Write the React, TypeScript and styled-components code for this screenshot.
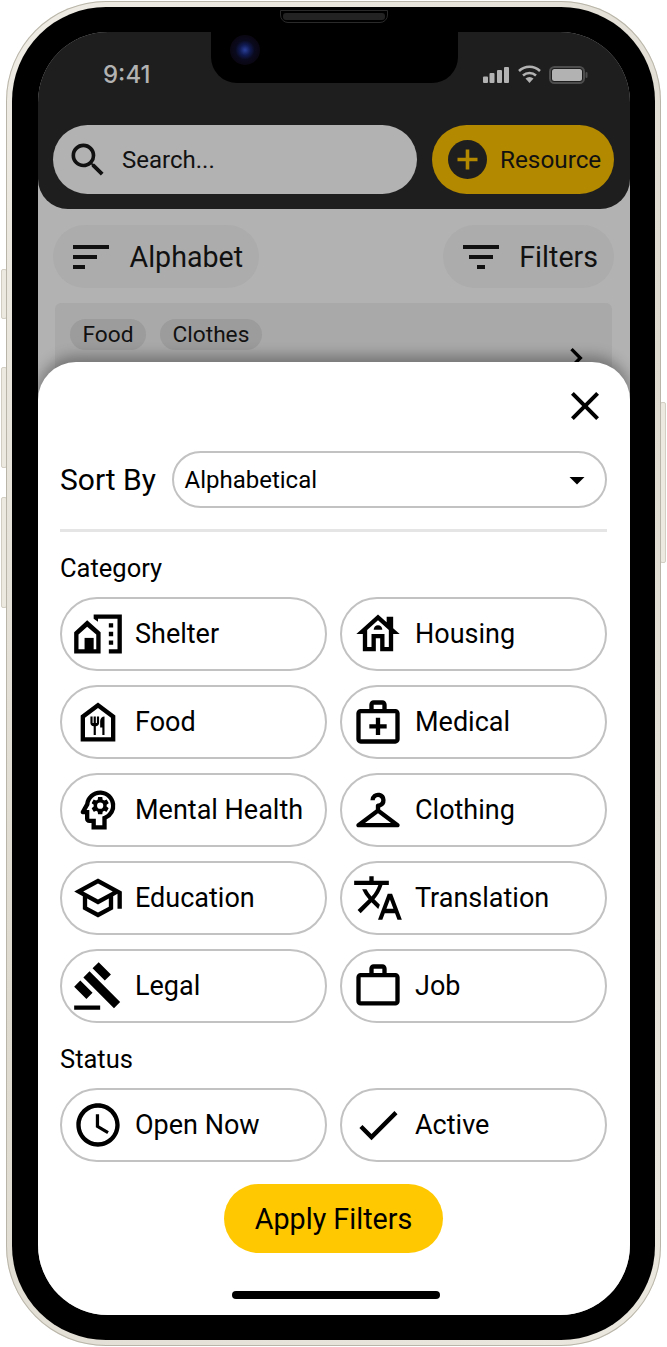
import styled, {createGlobalStyle} from "styled-components";
import type {ComponentType} from "react";
import {
    MdAccessTime,
    MdArrowDropDown,
    MdCheck,
    MdChevronRight,
    MdClose,
    MdFilterList,
    MdGavel,
    MdOutlineCheckroom,
    MdOutlineFoodBank,
    MdOutlineHouse,
    MdOutlineMedicalServices,
    MdOutlinePsychology,
    MdOutlineSchool,
    MdSearch,
    MdSort,
    MdTranslate,
    MdWorkOutline,
} from "react-icons/md";

const Global = createGlobalStyle`
  html, body {
    margin: 0;
    padding: 0;
    background: white;
  }

  body {
    font-family: Roboto, "Liberation Sans", sans-serif;
    color: black;
  }
`;

const Page = styled.div`
  position: relative;
  width: 667px;
  height: 1347px;
  padding: 1px 6px;
  box-sizing: border-box;
`;

const SideButton = styled.div<{ $side: "left" | "right"; $top: number; $height: number }>`
  position: absolute;
  top: ${p => p.$top}px;
  height: ${p => p.$height}px;
  width: 6px;
  box-sizing: border-box;
  ${p => p.$side}: 1px;
  background: #ece9e1;
  border: 1px solid #d2cec3;
  border-radius: 2px;
`;

const Frame = styled.div`
  position: relative;
  height: 100%;
  box-sizing: border-box;
  padding: 6px;
  border-radius: 100px;
  background: linear-gradient(135deg, #efece5, #dedad0 50%, #ebe8e0);
  box-shadow: inset 0 0 0 1px #b9b5a9;
`;

const Bezel = styled.div`
  position: relative;
  height: 100%;
  box-sizing: border-box;
  padding: 25px 25px 25px 26px;
  border-radius: 94px;
  background: black;
`;

const Speaker = styled.div`
  position: absolute;
  top: 3px;
  left: 50%;
  width: 108px;
  height: 13px;
  margin-left: -54px;
  box-sizing: border-box;
  padding: 2px;
  border-radius: 0 0 8px 8px;
  background: black;
  border: 1px solid #2a2a2a;

  &::after {
    content: "";
    display: block;
    height: 7px;
    border-radius: 3px;
    background: #232323;
  }
`;

const Screen = styled.div`
  position: relative;
  height: 100%;
  overflow: hidden;
  border-radius: 70px;
  background: #b2b2b2;
`;

const Notch = styled.div`
  position: absolute;
  top: 0;
  left: 173px;
  width: 247px;
  height: 51px;
  border-radius: 0 0 26px 26px;
  background: black;
`;

const Camera = styled.div`
  position: absolute;
  top: 3px;
  left: 19px;
  width: 30px;
  height: 30px;
  border-radius: 50%;
  background: radial-gradient(circle, #2a3f9a 0, #101a50 25%, #0a0a1e 45%, #0a0612 70%, black 100%);
`;

const Header = styled.header`
  height: 177px;
  box-sizing: border-box;
  padding: 0 16px 0 15px;
  border-radius: 0 0 30px 30px;
  background: #1e1e1e;
`;

const StatusBar = styled.div`
  display: flex;
  align-items: center;
  justify-content: space-between;
  height: 93px;
  box-sizing: border-box;
  padding: 0 26px 8px 50px;
  color: #b2b2b2;
`;

const Time = styled.span`
  font-family: Inter, sans-serif;
  font-size: 24px;
  font-weight: 500;
`;

const StatusIcons = styled.svg`
  display: block;
`;

const SearchRow = styled.div`
  display: flex;
  gap: 15px;
`;

const SearchBox = styled.div`
  flex: 1;
  display: flex;
  align-items: center;
  gap: 12px;
  height: 69px;
  padding-left: 13px;
  border-radius: 35px;
  background: #b2b2b2;
  color: #111;
  font-size: 24px;
`;

const AddButton = styled.div`
  display: flex;
  align-items: center;
  gap: 13px;
  width: 182px;
  height: 69px;
  box-sizing: border-box;
  padding-left: 16px;
  border-radius: 35px;
  background: #b38900;
  font-size: 24.3px;
  color: #111;
`;

const AddCircle = styled.svg`
  display: block;
  flex: none;
`;

const ToolRow = styled.div`
  display: flex;
  justify-content: space-between;
  padding: 16px 16px 0 15px;
`;

const ToolButton = styled.div`
  display: flex;
  align-items: center;
  gap: 14.5px;
  height: 63px;
  padding: 0 16px 0 14px;
  border-radius: 32px;
  background: #acacac;
  font-size: 28.6px;
  color: #111;
`;

const Card = styled.div`
  position: relative;
  height: 120px;
  margin: 15px 18px 0 17px;
  padding: 16px 15px;
  box-sizing: border-box;
  border-radius: 6px;
  background: #a9a9a9;
`;

const ChipRow = styled.div`
  display: flex;
  gap: 14px;
`;

const Chip = styled.span`
  height: 31px;
  line-height: 31px;
  padding: 0 12.5px;
  border-radius: 16px;
  background: #9c9c9c;
  font-size: 22.7px;
  color: #111;
`;

const CardChevron = styled.span`
  position: absolute;
  top: 35px;
  right: 16px;
  display: flex;
`;

const Sheet = styled.section`
  position: absolute;
  left: 0;
  right: 0;
  top: 330px;
  bottom: 0;
  padding: 0 23px 0 22px;
  border-radius: 38px 38px 0 0;
  background: white;
  box-shadow: 0 -6px 14px rgba(0, 0, 0, 0.32);
`;

const CloseRow = styled.div`
  display: flex;
  justify-content: flex-end;
  height: 89px;
  padding-top: 20px;
  box-sizing: border-box;
  margin-right: -2px;
`;

const SortRow = styled.div`
  display: flex;
  align-items: center;
  gap: 16px;
`;

const SortLabel = styled.span`
  font-size: 30px;
`;

const Select = styled.div`
  flex: 1;
  display: flex;
  align-items: center;
  justify-content: space-between;
  height: 57px;
  box-sizing: border-box;
  padding: 0 10px 0 10.5px;
  border: 2px solid #c2c2c2;
  border-radius: 29px;
  font-size: 24px;
`;

const Divider = styled.hr`
  height: 3px;
  margin: 21px 0 0;
  border: 0;
  background: #e5e5e5;
`;

const SectionLabel = styled.div<{ $top: number }>`
  margin-top: ${p => p.$top}px;
  height: 29px;
  line-height: 29px;
  font-size: 25.5px;
`;

const OptionGrid = styled.div`
  display: grid;
  grid-template-columns: 1fr 1fr;
  gap: 14px 13px;
  margin-top: 14px;
`;

const Option = styled.div`
  display: flex;
  align-items: center;
  gap: 11px;
  height: 74px;
  box-sizing: border-box;
  padding-left: 10px;
  border: 2px solid #c2c2c2;
  border-radius: 37px;
  font-size: 27px;

  > svg {
    flex: none;
  }
`;

const ApplyRow = styled.div`
  display: flex;
  justify-content: center;
  margin-top: 22px;
`;

const ApplyButton = styled.div`
  display: flex;
  align-items: center;
  justify-content: center;
  width: 219px;
  height: 69px;
  border-radius: 35px;
  background: #ffc800;
  font-size: 28.7px;
`;

const HomeBar = styled.div`
  position: absolute;
  left: 194px;
  bottom: 16px;
  width: 208px;
  height: 8px;
  border-radius: 4px;
  background: black;
`;

// home_work, narrower house and the door filled in like the design has it
const ShelterIcon = ({size}: { size?: number }) => (
    <svg width={size} height={size} viewBox="0 0 24 24" fill="currentColor">
        <path fillRule="evenodd" d="M1 11.2V21h12.2v-9.8L7 5.6zM3 12.2l4-3.5 4.2 3.5V19H3z"/>
        <path d="M5.8 13.8H10V20H5.8z"/>
        <path d="M17 7h2v2h-2zM17 11h2v2h-2zM17 15h2v2h-2zM10 3v1.97l2 1.43V5h9v14h-4v2h6V3z"/>
    </svg>
);

type Item = { name: string; icon: ComponentType<{ size?: number }> };

const categories: Item[] = [
    {name: "Shelter", icon: ShelterIcon},
    {name: "Housing", icon: MdOutlineHouse},
    {name: "Food", icon: MdOutlineFoodBank},
    {name: "Medical", icon: MdOutlineMedicalServices},
    {name: "Mental Health", icon: MdOutlinePsychology},
    {name: "Clothing", icon: MdOutlineCheckroom},
    {name: "Education", icon: MdOutlineSchool},
    {name: "Translation", icon: MdTranslate},
    {name: "Legal", icon: MdGavel},
    {name: "Job", icon: MdWorkOutline},
];

const statuses: Item[] = [
    {name: "Open Now", icon: MdAccessTime},
    {name: "Active", icon: MdCheck},
];

const Options = ({items}: { items: Item[] }) => (
    <OptionGrid>
        {items.map(({name, icon: Icon}) => (
            <Option key={name}><Icon size={52}/>{name}</Option>
        ))}
    </OptionGrid>
);

const App = () => {
    return (
        <Page>
            <Global/>
            <SideButton $side="left" $top={269} $height={50}/>
            <SideButton $side="left" $top={367} $height={101}/>
            <SideButton $side="left" $top={497} $height={111}/>
            <SideButton $side="right" $top={402} $height={161}/>
            <Frame>
                <Bezel>
                    <Speaker/>
                    <Screen>
                        <Header>
                            <StatusBar>
                                <Time>9:41</Time>
                                <StatusIcons width="106" height="20" viewBox="0 0 106 20">
                                    <g fill="#b2b2b2">
                                        <rect x="1" y="11.5" width="5" height="6.5" rx="1"/>
                                        <rect x="7.5" y="8" width="5" height="10" rx="1"/>
                                        <rect x="15" y="5" width="5" height="13" rx="1"/>
                                        <rect x="22" y="2" width="5" height="16" rx="1"/>
                                        <path d="M47.5 18l-4-4.5a6 6 0 0 1 8 0z"/>
                                        <rect x="70" y="4" width="30" height="12" rx="2.5"/>
                                    </g>
                                    <g fill="none" stroke="#b2b2b2" strokeWidth="2.5">
                                        <path d="M41 10.5a9.5 9.5 0 0 1 13 0"/>
                                        <path d="M37 6a15 15 0 0 1 21 0"/>
                                    </g>
                                    <rect x="68" y="2" width="34" height="16" rx="4.5" fill="none" stroke="#4d4d4d" strokeWidth="2"/>
                                    <rect x="103.5" y="7" width="2" height="6" rx="1" fill="#4d4d4d"/>
                                </StatusIcons>
                            </StatusBar>
                            <SearchRow>
                                <SearchBox><MdSearch size={44}/>Search...</SearchBox>
                                <AddButton>
                                    <AddCircle width="39" height="39" viewBox="0 0 39 39">
                                        <circle cx="19.5" cy="19.5" r="19.5" fill="#1e1e1e"/>
                                        <path d="M19.5 9.5v20M9.5 19.5h20" stroke="#b38900" strokeWidth="3.6"/>
                                    </AddCircle>
                                    Resource
                                </AddButton>
                            </SearchRow>
                        </Header>
                        <ToolRow>
                            <ToolButton><MdSort size={48}/>Alphabet</ToolButton>
                            <ToolButton><MdFilterList size={48}/>Filters</ToolButton>
                        </ToolRow>
                        <Card>
                            <ChipRow>
                                <Chip>Food</Chip>
                                <Chip>Clothes</Chip>
                            </ChipRow>
                            <CardChevron><MdChevronRight size={40}/></CardChevron>
                        </Card>
                        <Notch><Camera/></Notch>
                        <Sheet>
                            <CloseRow><MdClose size={48}/></CloseRow>
                            <SortRow>
                                <SortLabel>Sort By</SortLabel>
                                <Select>Alphabetical<MdArrowDropDown size={36}/></Select>
                            </SortRow>
                            <Divider/>
                            <SectionLabel $top={22}>Category</SectionLabel>
                            <Options items={categories}/>
                            <SectionLabel $top={22}>Status</SectionLabel>
                            <Options items={statuses}/>
                            <ApplyRow><ApplyButton>Apply Filters</ApplyButton></ApplyRow>
                            <HomeBar/>
                        </Sheet>
                    </Screen>
                </Bezel>
            </Frame>
        </Page>
    );
};

export default App;
